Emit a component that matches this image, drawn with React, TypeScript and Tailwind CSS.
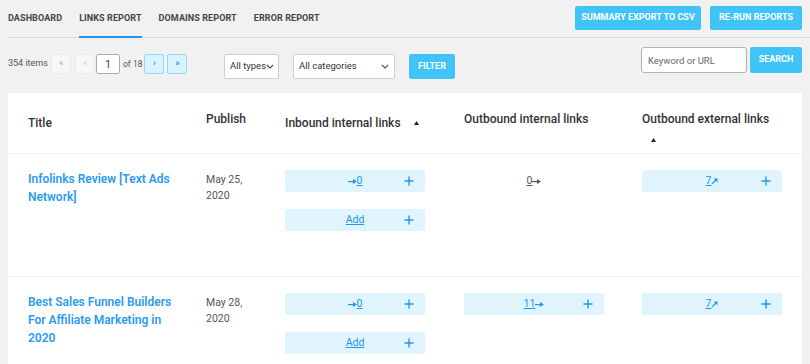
import { JSX } from 'react';

function ArrowRight({ color = '#2196f3' }: { color?: string }): JSX.Element {
  return (
    <svg width="9" height="5" viewBox="0 0 9 5" className="inline-block">
      <rect x="0" y="2" width="6" height="1.2" fill={color} />
      <polygon points="5,0 9,2.5 5,5" fill={color} />
    </svg>
  );
}

function ArrowDiag(): JSX.Element {
  return (
    <svg width="7" height="7" viewBox="0 0 7 7" className="inline-block">
      <line x1="0.8" y1="6.2" x2="5" y2="2" stroke="#2196f3" strokeWidth="1.2" />
      <polygon points="2.6,0.6 6.6,0.4 6.4,4.4" fill="#2196f3" />
    </svg>
  );
}

function Plus(): JSX.Element {
  return (
    <svg width="10" height="10" viewBox="0 0 10 10">
      <path d="M5 0.5v9M0.5 5h9" stroke="#2196f3" strokeWidth="1.4" />
    </svg>
  );
}

function Chevron(): JSX.Element {
  return (
    <svg width="8" height="5" viewBox="0 0 8 5" className="shrink-0">
      <path d="M0.8 0.8 4 4 7.2 0.8" stroke="#444" strokeWidth="1.1" fill="none" />
    </svg>
  );
}

function SortUp(): JSX.Element {
  return (
    <svg width="5" height="4" viewBox="0 0 5 4" className="inline-block">
      <polygon points="2.5,0 5,4 0,4" fill="#222" />
    </svg>
  );
}

type LinkBoxProps = {
  children: React.ReactNode;
  filled?: boolean;
};

function LinkBox({ children, filled = true }: LinkBoxProps): JSX.Element {
  return (
    <div
      className={`grid h-[22px] w-[140px] grid-cols-[1fr_auto_1fr] items-center rounded-[2px] ${
        filled ? 'bg-[#dff4fd]' : ''
      }`}
    >
      <span />
      <span className="flex items-center text-[10.5px] leading-none">{children}</span>
      <span className="flex justify-end pr-[11px]">{filled && <Plus />}</span>
    </div>
  );
}

function Num({ n, gray = false }: { n: string; gray?: boolean }): JSX.Element {
  return <span className={`underline ${gray ? 'text-[#555]' : 'text-[#2196f3]'}`}>{n}</span>;
}

const rows = [
  {
    title: 'Infolinks Review [Text Ads Network]',
    date: ['May 25,', '2020'],
    outInternal: '0',
    outInternalBox: false,
    outExternal: '7',
  },
  {
    title: 'Best Sales Funnel Builders For Affiliate Marketing in 2020',
    date: ['May 28,', '2020'],
    outInternal: '11',
    outInternalBox: true,
    outExternal: '7',
  },
];

export default function App(): JSX.Element {
  return (
    <div className="h-[364px] w-[810px] overflow-hidden bg-[#f1f1f1] font-['Roboto',sans-serif] text-[#333]">
      {/* Top bar */}
      <div className="ml-2 flex h-[38px] items-center justify-between border-b border-[#dadada] pr-2">
        <div className="flex h-full gap-[17px] text-[9px] font-bold tracking-[0.1px] text-[#444]">
          <span className="flex h-full items-center">DASHBOARD</span>
          <span className="relative flex h-full items-center">
            LINKS REPORT
            <span className="absolute -bottom-px left-0 right-0 h-[2px] bg-[#2196f3]" />
          </span>
          <span className="flex h-full items-center">DOMAINS REPORT</span>
          <span className="flex h-full items-center">ERROR REPORT</span>
        </div>
        <div className="-mt-px flex gap-[9px]">
          <button className="h-6 w-[126px] rounded-[2px] bg-[#40c4f7] text-[9px] font-bold text-white">
            SUMMARY EXPORT TO CSV
          </button>
          <button className="h-6 w-[92px] rounded-[2px] bg-[#40c4f7] text-[9px] font-bold text-white">
            RE-RUN REPORTS
          </button>
        </div>
      </div>

      {/* Filters */}
      <div className="flex h-[55px] justify-between px-2">
        <div className="mt-4 flex items-start">
          <div className="flex h-5 w-[43px] items-center whitespace-nowrap text-[9px] text-[#555]">354 items</div>
          <div className="flex w-[173px] items-center">
            <span className="flex h-5 w-5 items-center justify-center rounded-[2px] border border-[#ececec] bg-[#f7f7f7] text-[9px] text-[#aaa]">
              «
            </span>
            <span className="ml-1 flex h-5 w-5 items-center justify-center rounded-[2px] border border-[#ececec] bg-[#f7f7f7] text-[9px] text-[#aaa]">
              ‹
            </span>
            <span className="ml-px flex h-5 w-[24px] items-center justify-center rounded-[3px] border border-[#a9a9a9] bg-white text-[10px] text-[#333]">
              1
            </span>
            <span className="ml-[3px] mr-[2px] text-[8.5px] text-[#555]">of 18</span>
            <span className="flex h-5 w-5 items-center justify-center rounded-[2px] border border-[#8fdcf7] bg-[#d9f3fe] text-[9px] font-bold text-[#2196f3]">
              ›
            </span>
            <span className="ml-[3px] flex h-5 w-5 items-center justify-center rounded-[2px] border border-[#8fdcf7] bg-[#d9f3fe] text-[9px] font-bold text-[#2196f3]">
              »
            </span>
          </div>
          <div className="flex h-[25px] w-[55px] items-center justify-between whitespace-nowrap rounded-[2px] border border-[#cfcfcf] bg-white pl-[5px] pr-[4px] text-[9.5px] text-[#333]">
            All types
            <Chevron />
          </div>
          <div className="ml-[14px] flex h-[25px] w-[102px] items-center justify-between whitespace-nowrap rounded-[2px] border border-[#cfcfcf] bg-white pl-[5px] pr-[5px] text-[9.5px] text-[#333]">
            All categories
            <Chevron />
          </div>
          <button className="ml-[14px] h-[25px] w-[46px] rounded-[2px] bg-[#40c4f7] text-[9px] font-bold text-white">
            FILTER
          </button>
        </div>
        <div className="mt-[9px] flex items-start gap-[3px]">
          <input
            className="h-[26px] w-[106px] rounded-[3px] border border-[#b3b3b3] bg-white px-[6px] text-[9.5px] outline-none placeholder:text-[#666]"
            placeholder="Keyword or URL"
          />
          <button className="h-[26px] w-[52px] rounded-[2px] bg-[#40c4f7] text-[9px] font-bold text-white">
            SEARCH
          </button>
        </div>
      </div>

      {/* Table panel */}
      <div className="mx-2 bg-white">
        <div className="grid h-[61px] grid-cols-[178px_79px_179px_178px_1fr] border-b border-[#f0f0f0] pl-5 text-[12px] font-medium leading-4 text-[#333]">
          <div className="pt-[22px]">Title</div>
          <div className="pt-[18px]">Publish</div>
          <div className="flex items-start gap-[13px] pt-[22px]">
            Inbound internal links
            <span className="pt-[1px] leading-none">
              <SortUp />
            </span>
          </div>
          <div className="pt-[18px]">Outbound internal links</div>
          <div className="pt-[18px]">
            <div>Outbound external links</div>
            <div className="pl-[9px] pt-[6px] leading-none">
              <SortUp />
            </div>
          </div>
        </div>

        {rows.map((r, i) => (
          <div
            key={i}
            className="grid h-[123px] grid-cols-[178px_79px_179px_178px_1fr] border-b border-[#f0f0f0] pl-5 pt-4"
          >
            <div className="pr-[26px] text-[12px] font-semibold leading-[18px] text-[#2a9bf2]">{r.title}</div>
            <div className="pt-[2px] text-[10.5px] leading-4 text-[#555]">
              {r.date[0]}
              <br />
              {r.date[1]}
            </div>
            <div className="flex flex-col gap-[17px]">
              <LinkBox>
                <ArrowRight />
                <Num n="0" />
              </LinkBox>
              <LinkBox>
                <span className="text-[#2196f3] underline">Add</span>
              </LinkBox>
            </div>
            <div>
              <LinkBox filled={r.outInternalBox}>
                <Num n={r.outInternal} gray={!r.outInternalBox} />
                <ArrowRight color={r.outInternalBox ? '#2196f3' : '#555'} />
              </LinkBox>
            </div>
            <div>
              <LinkBox>
                <Num n={r.outExternal} />
                <ArrowDiag />
              </LinkBox>
            </div>
          </div>
        ))}
      </div>
    </div>
  );
}
